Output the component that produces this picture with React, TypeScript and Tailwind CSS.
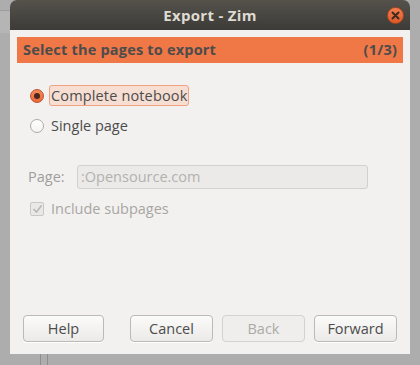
import React from "react";

const font = { fontFamily: '"Open Sans", "Noto Sans", sans-serif' };

function Radio({ checked }: { checked?: boolean }) {
  if (checked) {
    return (
      <span className="flex h-[14px] w-[14px] items-center justify-center rounded-full border border-[#b9532a] bg-gradient-to-b from-[#f38a5e] to-[#e9683a]">
        <span className="h-[6px] w-[6px] rounded-full bg-[#4a2618]" />
      </span>
    );
  }
  return (
    <span className="h-[14px] w-[14px] rounded-full border border-[#aeaaa4] bg-gradient-to-b from-white to-[#f4f3f2]" />
  );
}

function Button({ label, disabled }: { label: string; disabled?: boolean }) {
  return (
    <div
      className={`flex h-[27px] w-[83px] items-center justify-center rounded-[4px] border text-[14.5px] ${
        disabled
          ? "border-[#d4d2cf] bg-[#efeeed] text-[#acaaa7]"
          : "border-[#bdbab5] bg-gradient-to-b from-[#fbfbfa] to-[#ebeae8] text-[#4c4c4c] shadow-[0_1px_0_#ffffff]"
      }`}
    >
      {label}
    </div>
  );
}

export default function App() {
  return (
    <div className="relative h-[365px] w-[420px] overflow-hidden bg-[#adadad]" style={font}>
      <div className="absolute left-0 top-[10px] h-[23px] w-[10px] border-t border-[#9d9d9d] bg-[#b5b5b5]" />
      <div className="absolute bottom-0 left-[40px] h-[11px] w-[8px] border-x border-[#8e8e8e]" />

      <div className="relative ml-[10px] flex h-[354px] w-[400px] flex-col">
        <div className="relative flex h-[30px] items-center justify-center rounded-t-[7px] bg-gradient-to-b from-[#55524c] to-[#3c3b37]">
          <span className="text-[15px] font-bold tracking-[0.3px] text-[#dfdbd2]">Export - Zim</span>
          <div className="absolute right-[6px] top-[7px] flex h-[17px] w-[17px] items-center justify-center rounded-full border border-[#a8451f] bg-gradient-to-b from-[#f37f50] to-[#df5a27]">
            <svg width="9" height="9" viewBox="0 0 9 9">
              <path d="M1.5 1.5 L7.5 7.5 M7.5 1.5 L1.5 7.5" stroke="#3a2a22" strokeWidth="2" strokeLinecap="round" />
            </svg>
          </div>
        </div>

        <div className="flex flex-1 flex-col bg-[#f2f1f0] px-[7px] pt-[7px] pb-[12px]">
          <div className="flex h-[26px] items-center justify-between bg-[#f07746] px-[6px] text-[14.5px] font-bold tracking-[0.2px] text-[#4c4c4c]">
            <span>Select the pages to export</span>
            <span>(1/3)</span>
          </div>

          <div className="mt-[22px] flex h-[21px] items-center pl-[13px]">
            <Radio checked />
            <span className="ml-[5px] flex h-[21px] items-center rounded-[3px] border border-[#f0a282] bg-[#f6ded3] px-[1px] text-[14.5px] tracking-[0.15px] text-[#4c4c4c]">
              Complete notebook
            </span>
          </div>

          <div className="mt-[9px] flex h-[21px] items-center pl-[13px]">
            <Radio />
            <span className="ml-[7px] text-[14.5px] text-[#4c4c4c]">Single page</span>
          </div>

          <div className="mt-[29px] flex h-[24px] items-center pl-[11px]">
            <span className="w-[49px] text-[14.5px] text-[#a09e9b]">Page:</span>
            <div className="flex h-[24px] w-[291px] items-center rounded-[3px] border border-[#d3d1cd] bg-[#ebeae8] px-[3px] text-[14.5px] text-[#b3b1ae]">
              :Opensource.com
            </div>
          </div>

          <div className="mt-[9px] flex h-[21px] items-center pl-[13px]">
            <span className="flex h-[14px] w-[14px] items-center justify-center rounded-[2px] border border-[#cac8c4] bg-[#e9e8e6]">
              <svg width="11" height="10" viewBox="0 0 11 10">
                <path d="M1.5 5 L4.5 8 L9.5 1.5" stroke="#b9b7b3" strokeWidth="1.6" fill="none" />
              </svg>
            </span>
            <span className="ml-[7px] text-[14.5px] text-[#a8a6a2]">Include subpages</span>
          </div>

          <div className="mt-auto flex items-center px-[6px]">
            <Button label="Help" />
            <div className="ml-[26px] flex gap-[9px]">
              <Button label="Cancel" />
              <Button label="Back" disabled />
              <Button label="Forward" />
            </div>
          </div>
        </div>
      </div>
    </div>
  );
}
